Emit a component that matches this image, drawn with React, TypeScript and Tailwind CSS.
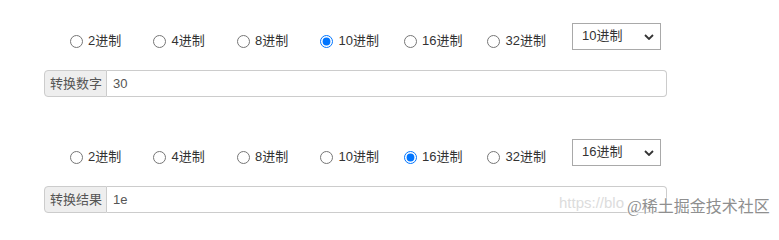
import { useState } from "react";

const BASES = [2, 4, 8, 10, 16, 32];

const FONT = {
  fontFamily: '"Liberation Sans", "Noto Sans CJK SC", Arial, sans-serif',
};

function Chevron() {
  return (
    <svg width="10" height="6" viewBox="0 0 10 6" className="shrink-0">
      <path d="M1 1l4 4 4-4" fill="none" stroke="#333" strokeWidth="1.8" />
    </svg>
  );
}

function BaseRow({
  name,
  value,
  onChange,
}: {
  name: string;
  value: number;
  onChange: (v: number) => void;
}) {
  return (
    <div className="flex items-start h-[27px]">
      {/* Radio choices */}
      <div className="flex pl-[25.5px]">
        {BASES.map((b, i) => (
          <label
            key={b}
            className={`flex items-center h-[20px] mt-[8px] text-[13px] text-[#333] cursor-pointer ${
              i === BASES.length - 1 ? "w-[85px]" : "w-[83.5px]"
            }`}
          >
            <input
              type="radio"
              name={name}
              checked={value === b}
              onChange={() => onChange(b)}
              className="w-[13px] h-[13px] m-0 shrink-0"
            />
            <span className="ml-[5.5px]">{b}进制</span>
          </label>
        ))}
      </div>

      {/* Dropdown */}
      <div className="relative w-[89px] h-[27px] border border-[#a9a9a9] bg-white flex items-center justify-between pl-[9px] pr-[6px] text-[13px] text-[#333]">
        <span className="-mt-[2px]">{value}进制</span>
        <Chevron />
      </div>
    </div>
  );
}

function InputGroup({ label, value }: { label: string; value: string }) {
  return (
    <div className="flex w-[623px] h-[27px] mt-[20px] text-[13px]">
      <span className="flex items-center pl-[5px] pr-[4px] bg-[#eee] border border-[#ccc] rounded-l-[4px] text-[#555]">
        {label}
      </span>
      <div className="flex-1 flex items-center pl-[6px] border border-l-0 border-[#ccc] rounded-r-[4px] text-[#555] bg-white">
        {value}
      </div>
    </div>
  );
}

export default function App() {
  const [from, setFrom] = useState(10);
  const [to, setTo] = useState(16);

  return (
    <div
      className="relative w-[779px] h-[224px] bg-white pl-[44px] pt-[23px] overflow-hidden"
      style={FONT}
    >
      {/* Source */}
      <BaseRow name="from" value={from} onChange={setFrom} />
      <InputGroup label="转换数字" value="30" />

      {/* Result */}
      <div className="mt-[42px]">
        <BaseRow name="to" value={to} onChange={setTo} />
        <InputGroup label="转换结果" value="1e" />
      </div>

      {/* Watermark */}
      <div className="absolute left-[559px] top-[195px] text-[15px] text-[#dcdcdc] whitespace-nowrap leading-none">
        https://blo
      </div>
      <div
        className="absolute left-[627px] top-[199px] text-[16px] text-[#8f8f8f] whitespace-nowrap leading-none"
        style={{
          fontFamily: '"Liberation Serif", "Noto Sans CJK SC", serif',
          textShadow: "0 0 2px #fff, 0 0 2px #fff, 0 0 3px #fff",
        }}
      >
        @稀土掘金技术社区
      </div>
    </div>
  );
}
